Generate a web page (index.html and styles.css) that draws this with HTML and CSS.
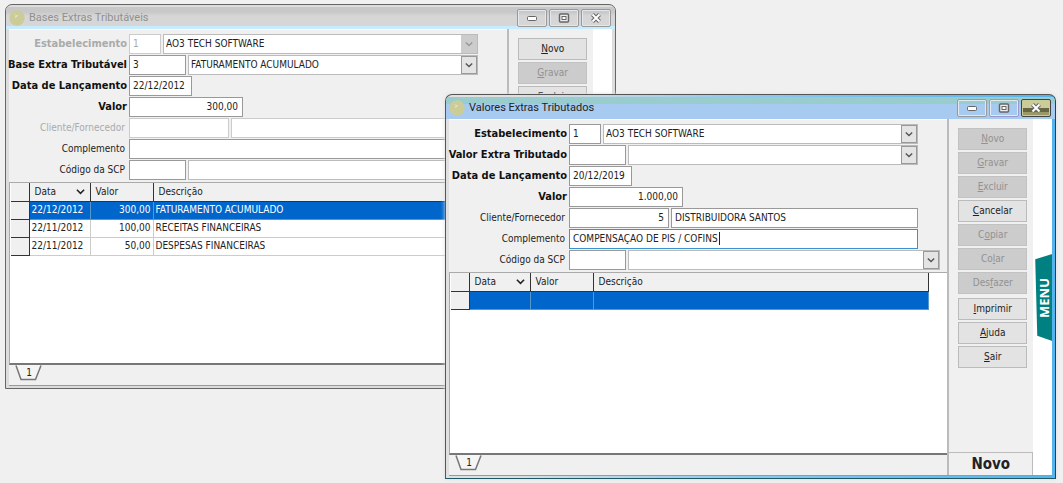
FILE: index.html
```html
<!DOCTYPE html>
<html lang="pt-BR">
<head>
<meta charset="utf-8">
<title>Valores Extras Tributados</title>
<link rel="stylesheet" href="styles.css">
</head>
<body>
<svg class="defs" aria-hidden="true">
  <symbol id="chevron" viewBox="0 0 10 10"><path d="M1 3l4 4 4-4" fill="none" stroke="currentColor" stroke-width="1.7"/></symbol>
  <symbol id="min" viewBox="0 0 12 10"><rect x="1.5" y="3.500" width="9" height="4" rx="1" fill="#fff" stroke="#666"/></symbol>
  <symbol id="max" viewBox="0 0 12 10"><rect x="1.500" y="1" width="9" height="8" rx="1" fill="#eee" stroke="#666" stroke-width="1.500"/><rect x="4" y="3.500" width="4" height="3" fill="#fff" stroke="#666"/></symbol>
  <symbol id="close" viewBox="0 0 12 10"><path d="M2.500 1.500l7 7M9.500 1.500l-7 7" stroke="#666" stroke-width="4" fill="none"/><path d="M2.500 1.500l7 7M9.500 1.500l-7 7" stroke="#fff" stroke-width="2" fill="none"/></symbol>
  <symbol id="app" viewBox="0 0 16 16"><circle cx="8" cy="8" r="7.700" fill="#cccc99"/><path d="M6 4.500l1 1M8.500 5l-1.500 2M6 7h1" stroke="#eeeecc" fill="none"/></symbol>
  <symbol id="tab" viewBox="0 0 28 16"><path d="M1 0L6 14.500H20.500L26 0z" fill="#f5f5f5"/><path d="M1 0.500L6 14.500H20.500L26 0.500" fill="none" stroke="#777" stroke-width="1.500"/></symbol>
</svg>
<main class="desktop">
  <section class="window window-back">
    <header class="titlebar">
      <svg class="app-icon"><use href="#app"/></svg>
      <h1 class="title">Bases Extras Tributáveis</h1>
      <div class="controls">
        <button class="control" aria-label="Minimizar"><svg><use href="#min"/></svg></button>
        <button class="control" aria-label="Maximizar"><svg><use href="#max"/></svg></button>
        <button class="control" aria-label="Fechar"><svg><use href="#close"/></svg></button>
      </div>
    </header>
    <div class="body">
      <div class="content">
        <form class="form">
          <div class="row off"><label class="strong" for="b-est">Estabelecimento</label><input id="b-est" class="w-xs" value="1" disabled><span class="combo off"><select aria-label="Nome do estabelecimento" disabled><option>AO3 TECH SOFTWARE</option></select><svg class="arrow"><use href="#chevron"/></svg></span></div>
          <div class="row"><label class="strong" for="b-base">Base Extra Tributável</label><input id="b-base" class="w-sm" value="3"><span class="combo"><select aria-label="Nome da base"><option>FATURAMENTO ACUMULADO</option></select><svg class="arrow"><use href="#chevron"/></svg></span></div>
          <div class="row"><label class="strong" for="b-data">Data de Lançamento</label><input id="b-data" class="w-md" value="22/12/2012"></div>
          <div class="row"><label class="strong" for="b-valor">Valor</label><input id="b-valor" class="w-lg num" value="300,00"></div>
          <div class="row off"><label for="b-cli">Cliente/Fornecedor</label><input id="b-cli" class="w-ml num" disabled><input class="fill" aria-label="Nome do cliente" disabled></div>
          <div class="row"><label for="b-comp">Complemento</label><input id="b-comp" class="fill"></div>
          <div class="row wide"><label for="b-scp">Código da SCP</label><input id="b-scp" class="w-sm"><span class="combo"><select aria-label="Nome da SCP"><option></option></select><svg class="arrow"><use href="#chevron"/></svg></span></div>
        </form>
        <div class="grid">
          <table>
            <thead><tr><th class="sel"></th><th class="c-data"><span class="sort">Data <svg><use href="#chevron"/></svg></span></th><th class="c-valor">Valor</th><th>Descrição</th></tr></thead>
            <tbody>
              <tr class="current"><th class="sel"></th><td>22/12/2012</td><td class="num">300,00</td><td>FATURAMENTO ACUMULADO</td></tr>
              <tr><th class="sel"></th><td>22/11/2012</td><td class="num">100,00</td><td>RECEITAS FINANCEIRAS</td></tr>
              <tr><th class="sel"></th><td>22/11/2012</td><td class="num">50,00</td><td>DESPESAS FINANCEIRAS</td></tr>
            </tbody>
          </table>
        </div>
        <div class="tabs"><button class="tab"><svg><use href="#tab"/></svg><span>1</span></button></div>
      </div>
      <aside class="side">
        <nav class="actions">
          <button class="action"><u>N</u>ovo</button>
          <button class="action" disabled><u>G</u>ravar</button>
          <button class="action"><u>E</u>xcluir</button>
        </nav>
      </aside>
      <div class="strip"></div>
    </div>
  </section>

  <section class="window window-front">
    <header class="titlebar">
      <svg class="app-icon"><use href="#app"/></svg>
      <h1 class="title">Valores Extras Tributados</h1>
      <div class="controls">
        <button class="control" aria-label="Minimizar"><svg><use href="#min"/></svg></button>
        <button class="control control-max" aria-label="Maximizar"><svg><use href="#max"/></svg></button>
        <button class="control control-close" aria-label="Fechar"><svg><use href="#close"/></svg></button>
      </div>
    </header>
    <div class="body">
      <div class="content">
        <form class="form">
          <div class="row"><label class="strong" for="v-est">Estabelecimento</label><input id="v-est" class="w-xs" value="1"><span class="combo"><select aria-label="Nome do estabelecimento"><option>AO3 TECH SOFTWARE</option></select><svg class="arrow"><use href="#chevron"/></svg></span></div>
          <div class="row"><label class="strong" for="v-extra">Valor Extra Tributado</label><input id="v-extra" class="w-sm"><span class="combo"><select aria-label="Nome do valor extra"><option></option></select><svg class="arrow"><use href="#chevron"/></svg></span></div>
          <div class="row"><label class="strong" for="v-data">Data de Lançamento</label><input id="v-data" class="w-md" value="20/12/2019"></div>
          <div class="row"><label class="strong" for="v-valor">Valor</label><input id="v-valor" class="w-lg num" value="1.000,00"></div>
          <div class="row"><label for="v-cli">Cliente/Fornecedor</label><input id="v-cli" class="w-ml num" value="5"><input class="fill" aria-label="Nome do cliente" value="DISTRIBUIDORA SANTOS"></div>
          <div class="row"><label for="v-comp">Complemento</label><span class="editing"><input id="v-comp" class="fill active" value="COMPENSAÇÃO DE PIS / COFINS"><i class="caret"></i></span></div>
          <div class="row wide"><label for="v-scp">Código da SCP</label><input id="v-scp" class="w-sm"><span class="combo"><select aria-label="Nome da SCP"><option></option></select><svg class="arrow"><use href="#chevron"/></svg></span></div>
        </form>
        <div class="grid">
          <table>
            <thead><tr><th class="sel"></th><th class="c-data"><span class="sort">Data <svg><use href="#chevron"/></svg></span></th><th class="c-valor">Valor</th><th>Descrição</th></tr></thead>
            <tbody>
              <tr class="current"><th class="sel"></th><td></td><td></td><td></td></tr>
            </tbody>
          </table>
        </div>
        <div class="tabs"><button class="tab"><svg><use href="#tab"/></svg><span>1</span></button></div>
      </div>
      <aside class="side">
        <nav class="actions">
          <button class="action" disabled><u>N</u>ovo</button>
          <button class="action" disabled><u>G</u>ravar</button>
          <button class="action" disabled><u>E</u>xcluir</button>
          <button class="action"><u>C</u>ancelar</button>
          <button class="action" disabled>C<u>o</u>piar</button>
          <button class="action" disabled>Co<u>l</u>ar</button>
          <button class="action" disabled>Des<u>f</u>azer</button>
          <button class="action group"><u>I</u>mprimir</button>
          <button class="action"><u>A</u>juda</button>
          <button class="action"><u>S</u>air</button>
        </nav>
        <p class="status">Novo</p>
      </aside>
      <div class="strip"><button class="menu"><span>MENU</span></button></div>
    </div>
  </section>
</main>
</body>
</html>
```

FILE: styles.css
```css
* { box-sizing: border-box; }

body {
  margin: 0;
  background: #f0f0f0;
  color: #222;
  font: 10px/14px "DejaVu Sans Condensed", "DejaVu Sans", sans-serif;
  font-stretch: condensed;
}

button, input, select { font: inherit; color: inherit; margin: 0; }

.defs { position: absolute; width: 0; height: 0; }

.desktop { position: relative; min-height: 100vh; overflow: hidden; }

/* Windows */
.window {
  position: absolute;
  width: 57.5%;
  border: 1px solid #666;
  border-radius: 7px 7px 0 0;
  padding: 2px 3px 2px;
  background: #dcdcdc;
  overflow: hidden;
}
.window-back { left: 5px; top: 4px; }
.window-front {
  left: 445px;
  top: 94px;
  border-color: #555 #17455f #1d5965 #555;
  background: linear-gradient(90deg, #e0e0e0 10%, #8cc8f0 50%, #55b4ee 99%);
  box-shadow: 0 0 4px #ddd;
}

.titlebar { display: flex; align-items: center; height: 22px; margin: 0 -3px; padding: 0 4px 0 3px; }
.window-back .titlebar { background: linear-gradient(#c8c8c8 0 5px, #d6d6d6 9px 19px, #c8ecff 19px); color: #909090; }
.window-front .titlebar { background: linear-gradient(#99cccc 0 7px, #a6caf0 7px); }
.app-icon { width: 16px; height: 16px; }
.title { flex: 1; margin: 0 4px; font: 11px/16px Roboto, "Open Sans", sans-serif; }

.controls { display: flex; gap: 2px; }
.control {
  display: grid;
  place-items: center;
  width: 30px;
  height: 18px;
  padding: 0;
  border: 1px solid #999;
  border-radius: 2px;
  background: transparent;
  box-shadow: inset 0 0 0 1px #e2e8ee;
}
.control svg { width: 12px; height: 10px; }
.control-max { border-color: #9999cc; }
.control-close {
  border-color: #444;
  background: linear-gradient(#cccc99 50%, #666644 50% 78%, #999966 78%);
  box-shadow: inset 0 0 0 1px #cccc99;
}

.body { display: flex; background: #f0f0f0; border-bottom: 1px solid #999; }
.content { flex: 1; min-width: 0; border-top: 1px solid #fff; }

/* Form */
.form { display: flex; flex-direction: column; gap: 1px; padding: 4px 0 2px; }
.row { display: flex; align-items: center; gap: 2px; height: 20px; margin-right: 29px; }
.row.wide { margin-right: 7px; }
.row label { display: flex; justify-content: flex-end; width: 118px; padding-right: 2px; white-space: nowrap; }
.row label.strong { padding-right: 0; font-size: 11px; font-weight: bold; color: #111; }
.row.off label, .row.off input { color: #aaa; }
.row input {
  height: 20px;
  min-width: 0;
  padding: 0 4px 1px 3px;
  border: 1px solid #999;
  border-radius: 0;
  background: #fff;
}
.row.off input { border-color: #ccc; }
.num { text-align: right; }
.w-xs { width: 32px; }
.w-sm { width: 57px; }
.w-md { width: 63px; }
.w-lg { width: 114px; }
.w-ml { width: 100px; }
.fill { flex: 1; }
.row input.active { border-color: #3c92cc; outline: none; }
.editing { position: relative; display: flex; flex: 1; }
.caret { position: absolute; left: 150px; top: 3px; width: 1px; height: 13px; background: #222; }

.combo { display: flex; flex: 1; height: 20px; border: 1px solid #bbb; background: #fff; }
.combo select {
  flex: 1;
  min-width: 0;
  appearance: none;
  border: 0;
  padding: 0 2px 1px;
  background: transparent;
  color: #222;
  opacity: 1;
}
.arrow { width: 16px; height: 18px; padding: 3px; border: 1px solid #999; background: #e4e4e4; color: #555; }
.combo.off .arrow { border-color: #ccc; background: #ccc; color: #999; }

/* Record grid */
.grid { height: 183px; padding: 0 18px 0 1px; border: 1px solid #aaa; border-right-width: 0; border-bottom: 2px solid #777; background: #fff; }
table { width: 100%; border-collapse: collapse; table-layout: fixed; }
tr { height: 18px; }
th, td { height: 18px; padding: 0 2px; overflow: hidden; white-space: nowrap; font-weight: normal; text-align: left; }
th { background: #f0f0f0; border-right: 1px solid #333; border-bottom: 1px solid #333; }
thead th { padding: 0 5px; }
td { border-right: 1px solid #ccc; border-bottom: 1px solid #ccc; }
td.num { text-align: right; }
.sel { width: 18px; }
.c-data { width: 61px; }
.c-valor { width: 63px; }
.sort { display: flex; align-items: center; justify-content: space-between; }
.sort svg { width: 9px; height: 9px; }
.current td { background: #0066cc; color: #fff; border-color: #5599cc; }

.tabs { height: 20px; padding-left: 6px; }
.tab { position: relative; display: block; width: 28px; height: 16px; padding: 0; border: 0; background: none; }
.tab svg { position: absolute; left: 0; top: 0; width: 28px; height: 16px; }
.tab span { position: relative; }

/* Sidebar */
.side { display: flex; flex-direction: column; justify-content: space-between; width: 86px; border-left: 2px solid #bbb; }
.actions { display: flex; flex-direction: column; gap: 2px; padding: 9px 6px 0 9px; }
.action {
  height: 22px;
  padding: 0;
  border: 1px solid #bbb;
  border-radius: 0;
  background: #e3e3e3;
}
.action:disabled { background: #ccc; border-color: #c2c2c2; color: #929292; }
.action.group { margin-top: 2px; }
.status {
  margin: 0;
  padding: 1px 0;
  border: 1px solid #bbb;
  border-width: 1px 1px 0 0;
  font-size: 15px;
  line-height: 20px;
  font-weight: bold;
  text-align: center;
  color: #222;
}
.strip { position: relative; width: 19px; background: #fff; }
.menu {
  position: absolute;
  right: 0;
  top: 135px;
  display: grid;
  place-items: center;
  width: 17px;
  height: 87px;
  padding: 0;
  border: 0;
  background: #008080;
  clip-path: polygon(0 6%, 100% 0, 100% 100%, 12% 94%);
  color: #fff;
  font: bold 13px/16px "Open Sans", sans-serif;
}
.menu span { writing-mode: vertical-rl; transform: rotate(180deg); }
```
